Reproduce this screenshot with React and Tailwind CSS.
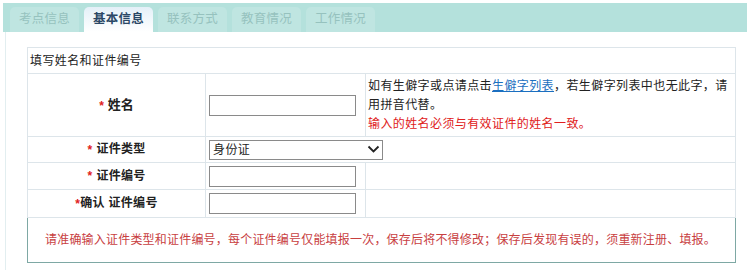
const tabs = ['考点信息', '基本信息', '联系方式', '教育情况', '工作情况'];

const Star = () => <span className="text-[#e02020] text-[12px] mr-[4px] align-middle">*</span>;

const App = () => {
  return (
    <div
      className="w-[752px] h-[274px] bg-white text-[12px] text-[#222]"
      style={{ fontFamily: '"Liberation Sans", "Noto Sans CJK SC", sans-serif' }}
    >
      <div className="pt-[3px] px-[3px]">
        <div className="w-[744px] h-[29px] bg-[#b4e1dc] flex items-end gap-[5px] pl-[7px]">
          {tabs.map((t, i) =>
            i === 1 ? (
              <div
                key={t}
                className="w-[69px] h-[25px] rounded-t-[5px] bg-gradient-to-b from-[#e4f0f8] to-white flex items-center justify-center font-bold text-[12.5px] tracking-[0.3px] text-[#2b4866]"
              >
                {t}
              </div>
            ) : (
              <div
                key={t}
                className="w-[69px] h-[25px] rounded-t-[5px] bg-[#bfe5e1] flex items-center justify-center text-[12.5px] tracking-[0.3px] text-[#96c2be]"
              >
                {t}
              </div>
            )
          )}
        </div>
      </div>
      <div className="ml-[5px] border-l border-[#e2eef0] h-[238px] pt-[15px] pl-[21px]">
        <table className="w-[709px] border-collapse">
          <tbody>
            <tr className="h-[26px]">
              <td colSpan={3} className="border border-[#dde5ea] px-[2px] tracking-[0.4px]">
                填写姓名和证件编号
              </td>
            </tr>
            <tr className="h-[63px]">
              <td className="w-[178px] border border-[#dde5ea] text-center font-bold text-[13px]">
                <Star />姓名
              </td>
              <td className="w-[160px] border border-[#dde5ea] px-[3px]">
                <input className="w-[147px] h-[21px] border border-[#8a8a8a] block" />
              </td>
              <td className="border border-[#dde5ea] px-[2px] leading-[19px] tracking-[0.4px]">
                <div>
                  如有生僻字或点请点击<span className="text-[#1b6fc0] underline cursor-pointer">生僻字列表</span>，若生僻字列表中也无此字，请用拼音代替。
                </div>
                <div className="text-[#e02020]">输入的姓名必须与有效证件的姓名一致。</div>
              </td>
            </tr>
            <tr className="h-[26px]">
              <td className="border border-[#dde5ea] text-center font-bold text-[12px] tracking-[0.3px]">
                <Star />证件类型
              </td>
              <td colSpan={2} className="border border-[#dde5ea] px-[3px]">
                <div className="w-[174px] h-[20px] border border-[#8a8a8a] flex items-center justify-between pl-[3px] pr-[2px] text-[12px] tracking-[0.4px]">
                  <span>身份证</span>
                  <svg width="13" height="9" viewBox="0 0 13 9" fill="none" stroke="#222" strokeWidth="1.8">
                    <path d="M1.5 1.5 L6.5 6.5 L11.5 1.5" />
                  </svg>
                </div>
              </td>
            </tr>
            <tr className="h-[27px]">
              <td className="border border-[#dde5ea] text-center font-bold text-[12px] tracking-[0.3px]">
                <Star />证件编号
              </td>
              <td className="border border-[#dde5ea] px-[3px]">
                <input className="w-[147px] h-[21px] border border-[#8a8a8a] block" />
              </td>
              <td className="border border-[#dde5ea]"></td>
            </tr>
            <tr className="h-[28px]">
              <td className="border border-[#dde5ea] text-center font-bold text-[12px] tracking-[0.3px]">
                <span className="text-[#e02020] text-[12px] align-middle">*</span>确认 证件编号
              </td>
              <td className="border border-[#dde5ea] px-[3px]">
                <input className="w-[147px] h-[21px] border border-[#8a8a8a] block" />
              </td>
              <td className="border border-[#dde5ea]"></td>
            </tr>
          </tbody>
        </table>
        <div className="w-[709px] h-[45px] border border-t-0 border-[#7ea8a4] flex items-center pl-[17px] text-[12px] tracking-[0.2px] text-[#c8403f] whitespace-nowrap">
          请准确输入证件类型和证件编号，每个证件编号仅能填报一次，保存后将不得修改；保存后发现有误的，须重新注册、填报。
        </div>
      </div>
    </div>
  );
};

export default App;
